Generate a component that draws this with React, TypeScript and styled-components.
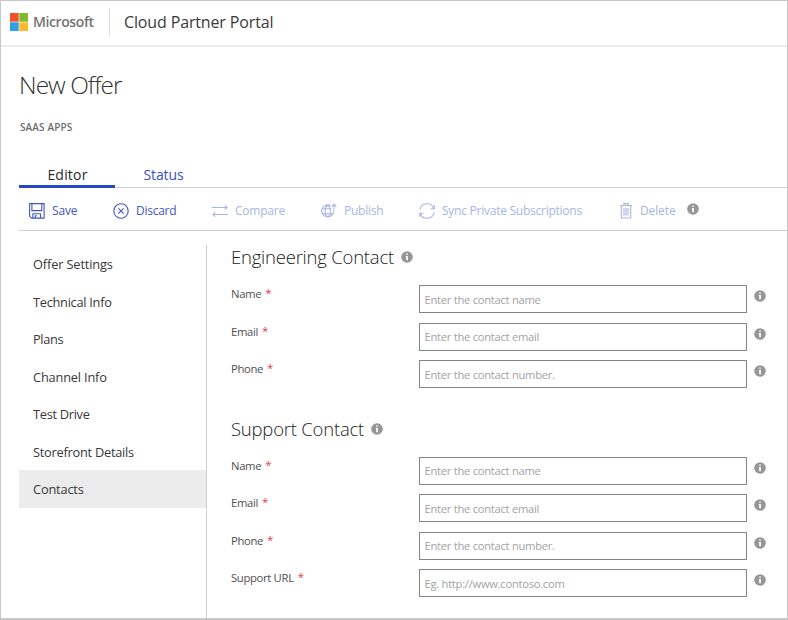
import React from 'react';
import styled, { createGlobalStyle } from 'styled-components';

const GlobalStyle = createGlobalStyle`
  * { box-sizing: border-box; }
  html, body { margin: 0; padding: 0; }
  body { background: #fff; font-family: 'Open Sans', 'Noto Sans', sans-serif; color: #333; }
`;

const Page = styled.div`
  width: 788px;
  height: 620px;
  overflow: hidden;
  display: flex;
  flex-direction: column;
  background: #fff;
  border: 1px solid #c8c8c8;
  border-bottom: 2px solid #c8c8c8;
`;

const Header = styled.header`
  height: 46px;
  flex: none;
  display: flex;
  align-items: center;
  padding: 0 0 2px 9px;
  border-bottom: 2px solid #ececec;
`;

const Brand = styled.span`
  width: 76px;
  margin-left: 5px;
  font-size: 14px;
  font-weight: 600;
  letter-spacing: -0.4px;
  line-height: 20px;
  color: #737373;
`;

const PortalName = styled.span`
  height: 28px;
  padding-left: 14px;
  border-left: 1px solid #dcdcdc;
  font-size: 16px;
  line-height: 28px;
  letter-spacing: -0.14px;
  color: #3a3a3a;
`;

const TitleBlock = styled.div`
  flex: none;
  height: 116px;
  padding: 21px 0 0 18px;
`;

const Title = styled.h1`
  margin: 0;
  font-size: 24.4px;
  font-weight: 300;
  line-height: 34px;
  letter-spacing: -0.95px;
  color: #333;
`;

const Kind = styled.div`
  margin: 17px 0 0 1px;
  font-size: 10px;
  font-weight: 600;
  line-height: 16px;
  letter-spacing: 0.12px;
  color: #6e6e6e;
`;

const Tabs = styled.nav`
  flex: none;
  display: flex;
  height: 25px;
  margin-left: 18px;
  border-bottom: 1px solid #cfcfcf;
`;

const Tab = styled.div<{ $active?: boolean }>`
  width: 96px;
  height: 25px;
  padding-left: 1px;
  text-align: center;
  font-size: 14px;
  line-height: 24px;
  letter-spacing: ${p => (p.$active ? '0.2px' : '-0.1px')};
  color: ${p => (p.$active ? '#2a2a2a' : '#3a4fc4')};
  border-bottom: 3px solid ${p => (p.$active ? '#2848c0' : 'transparent')};
`;

const Toolbar = styled.div`
  flex: none;
  display: flex;
  align-items: center;
  height: 43px;
  margin-left: 18px;
  padding: 3px 0 0 10px;
  border-bottom: 1px solid #cfcfcf;
`;

const Action = styled.div<{ $width: number; $track: number; $disabled?: boolean }>`
  display: flex;
  align-items: center;
  flex: none;
  width: ${p => p.$width}px;
  gap: 7px;
  font-size: 12px;
  line-height: 18px;
  letter-spacing: ${p => p.$track}px;
  white-space: nowrap;
  color: ${p => (p.$disabled ? '#a9b4e6' : '#4256c6')};
`;

const Glyph = styled.svg`
  flex: none;
  fill: none;
  stroke: currentColor;
  stroke-width: 1.1;
`;

const InfoSvg = styled.svg`
  flex: none;
  display: block;
`;

const ToolbarHint = styled.div`
  padding-bottom: 3px;
`;

const Body = styled.div`
  flex: 1;
  display: flex;
  min-height: 0;
  padding: 14px 0 0 18px;
`;

const Sidebar = styled.aside`
  width: 188px;
  flex: none;
  border-right: 1px solid #cfcfcf;
`;

const NavItem = styled.div<{ $track: number; $active?: boolean }>`
  height: 37.5px;
  padding-left: 14px;
  font-size: 12.8px;
  line-height: 38px;
  letter-spacing: ${p => p.$track}px;
  color: #383838;
  background: ${p => (p.$active ? '#ececec' : 'transparent')};
`;

const Form = styled.main`
  flex: 1;
  padding-left: 24px;
`;

const Section = styled.section`
  height: 171.5px;
`;

const SectionTitle = styled.h2`
  display: flex;
  align-items: center;
  gap: 7px;
  height: 24px;
  margin: 0 0 16px;
  font-size: 18.5px;
  font-weight: 300;
  line-height: 22px;
  letter-spacing: -0.22px;
  color: #222;
`;

const Field = styled.div`
  display: grid;
  grid-template-columns: 187.5px 328.5px auto;
  height: 37.5px;
`;

const Label = styled.label`
  display: flex;
  gap: 4px;
  font-size: 11.3px;
  line-height: 18px;
  letter-spacing: -0.34px;
  color: #505050;
`;

const Required = styled.span`
  font-size: 11.5px;
  line-height: 16px;
  color: #e8384a;
`;

const Input = styled.input`
  width: 328.5px;
  height: 28px;
  padding: 0 5px;
  border: 1px solid #858585;
  border-radius: 0;
  outline: none;
  background: #fff;
  font-family: inherit;
  font-size: 11.2px;
  letter-spacing: -0.27px;
  &::placeholder { color: #a3a3a3; opacity: 1; }
`;

const Hint = styled.div`
  padding: 5px 0 0 7px;
`;

const Info = () => (
  <InfoSvg width="12" height="12" viewBox="0 0 12 12">
    <circle cx="6" cy="6" r="5.8" fill="#969696" />
    <path d="M5.100 2.400h1.800v1.400H5.100zM4.700 4.900h2.200v4.400H5.200V5.700h-.5z" fill="#fff" />
  </InfoSvg>
);

const Logo = () => (
  <svg width="18" height="18" viewBox="0 0 18 18">
    <path fill="#f1512f" d="M0 0h8.7v8.7H0z" />
    <path fill="#7dbb2b" d="M9.3 0H18v8.7H9.3z" />
    <path fill="#2f9fe8" d="M0 9.3h8.7V18H0z" />
    <path fill="#fdb92c" d="M9.3 9.3H18V18H9.3z" />
  </svg>
);

const SaveIcon = () => (
  <Glyph width="16" height="16" viewBox="0 0 16 16">
    <path d="M.6.6h14.500v14.500H2.500L.6 13.300z M2.900.6v7h9.900v-7 M3.900 15v-4.300h7.600v4.300 M6.300 15v-2.200h1.500" />
  </Glyph>
);

const DiscardIcon = () => (
  <Glyph width="16" height="16" viewBox="0 0 16 16">
    <circle cx="8" cy="8" r="7.200" />
    <path d="M5.400 5.400l5.200 5.200M10.600 5.400l-5.200 5.200" />
  </Glyph>
);

const CompareIcon = () => (
  <Glyph width="16" height="16" viewBox="0 0 16 16">
    <path d="M0 4.500h15M12.700 2.300L15 4.500l-2.300 2.200M16 11.500H1M3.300 9.300L1 11.500l2.300 2.200" />
  </Glyph>
);

const PublishIcon = () => (
  <Glyph width="16" height="16" viewBox="0 0 16 16">
    <path d="M9.800 2.700A6 6 0 1 0 12.700 8M6.800 2.300C3.200 4.500 3.200 12 6.800 14.300M6.800 2.300c1.500 1 2.600 3 2.700 5.200 0 2.800-1 5.500-2.700 6.800M1.500 5.800h9M1.500 10.700h10.800M12.800 7.500c.2-2 .3-4 .3-6M10.900 3.500l2.200-2.200 2.200 2.200" />
  </Glyph>
);

const SyncIcon = () => (
  <Glyph width="16" height="16" viewBox="0 0 16 16">
    <path d="M1 6.500A7.100 7.100 0 0 1 14.700 5.500M15 9.500A7.100 7.100 0 0 1 1.300 10.500M15.200 2.200v3.600h-3.600M.8 13.800v-3.600h3.600" />
  </Glyph>
);

const DeleteIcon = () => (
  <Glyph width="14" height="16" viewBox="0 0 14 16">
    <path d="M1 2.500h12M4.800 2.500V.6h4.400v1.900M2.300 2.500v12.500h9.400V2.500M5 5v7.500M7 5v7.500M9 5v7.500" />
  </Glyph>
);

const NAV: { label: string; track: number; active?: boolean }[] = [
  { label: 'Offer Settings', track: -0.14 },
  { label: 'Technical Info', track: -0.28 },
  { label: 'Plans', track: -0.35 },
  { label: 'Channel Info', track: -0.18 },
  { label: 'Test Drive', track: -0.3 },
  { label: 'Storefront Details', track: -0.25 },
  { label: 'Contacts', track: -0.18, active: true },
];

const CONTACT_FIELDS = [
  { label: 'Name', placeholder: 'Enter the contact name' },
  { label: 'Email', placeholder: 'Enter the contact email' },
  { label: 'Phone', placeholder: 'Enter the contact number.' },
];

const SECTIONS = [
  { title: 'Engineering Contact', fields: CONTACT_FIELDS },
  {
    title: 'Support Contact',
    fields: [...CONTACT_FIELDS, { label: 'Support URL', placeholder: 'Eg. http://www.contoso.com' }],
  },
];

export default function App() {
  return (
    <>
      <GlobalStyle />
      <Page>
        <Header>
          <Logo />
          <Brand>Microsoft</Brand>
          <PortalName>Cloud Partner Portal</PortalName>
        </Header>
        <TitleBlock>
          <Title>New Offer</Title>
          <Kind>SAAS APPS</Kind>
        </TitleBlock>
        <Tabs>
          <Tab $active>Editor</Tab>
          <Tab>Status</Tab>
        </Tabs>
        <Toolbar>
          <Action $width={84} $track={-0.15}><SaveIcon />Save</Action>
          <Action $width={99} $track={-0.25}><DiscardIcon />Discard</Action>
          <Action $width={109} $track={-0.22} $disabled><CompareIcon />Compare</Action>
          <Action $width={98} $track={-0.24} $disabled><PublishIcon />Publish</Action>
          <Action $width={200} $track={-0.25} $disabled><SyncIcon />Sync Private Subscriptions</Action>
          <Action $width={68} $track={-0.12} $disabled><DeleteIcon />Delete</Action>
          <ToolbarHint><Info /></ToolbarHint>
        </Toolbar>
        <Body>
          <Sidebar>
            {NAV.map(n => (
              <NavItem key={n.label} $track={n.track} $active={n.active}>{n.label}</NavItem>
            ))}
          </Sidebar>
          <Form>
            {SECTIONS.map(s => (
              <Section key={s.title}>
                <SectionTitle>{s.title}<Info /></SectionTitle>
                {s.fields.map(f => (
                  <Field key={f.label}>
                    <Label>{f.label}<Required>*</Required></Label>
                    <Input placeholder={f.placeholder} />
                    <Hint><Info /></Hint>
                  </Field>
                ))}
              </Section>
            ))}
          </Form>
        </Body>
      </Page>
    </>
  );
}
